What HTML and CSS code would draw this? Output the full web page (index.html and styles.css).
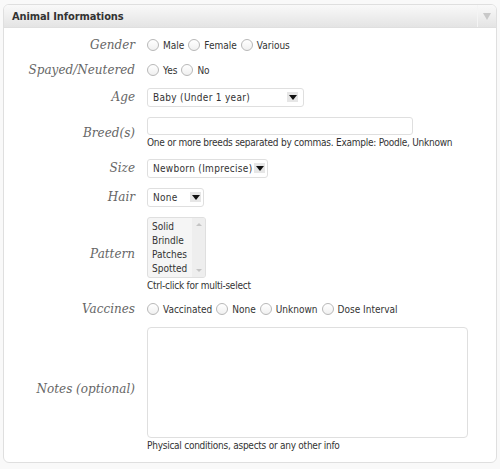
FILE: index.html
```html
<!DOCTYPE html>
<html>
<head>
<meta charset="utf-8">
<link rel="stylesheet" href="styles.css">
</head>
<body>
<div class="box">
  <div class="header">
    <div class="title">Animal Informations</div>
    <div class="toggle"><span class="tri"></span></div>
  </div>
  <div class="form">
    <div class="label">Gender</div>
    <div class="cell radios">
      <span class="radio"></span><span class="opt">Male</span>
      <span class="radio"></span><span class="opt">Female</span>
      <span class="radio"></span><span class="opt">Various</span>
    </div>

    <div class="label">Spayed/Neutered</div>
    <div class="cell radios">
      <span class="radio"></span><span class="opt">Yes</span>
      <span class="radio"></span><span class="opt">No</span>
    </div>

    <div class="label">Age</div>
    <div class="cell">
      <div class="select age"><span class="val">Baby (Under 1 year)</span><span class="arrow"><span class="down"></span></span></div>
    </div>

    <div class="label">Breed(s)</div>
    <div class="cell">
      <div class="input"></div>
      <div class="help">One or more breeds separated by commas. Example: Poodle, Unknown</div>
    </div>

    <div class="label">Size</div>
    <div class="cell">
      <div class="select"><span class="val">Newborn (Imprecise)</span><span class="arrow"><span class="down"></span></span></div>
    </div>

    <div class="label">Hair</div>
    <div class="cell">
      <div class="select hair"><span class="val">None</span><span class="arrow"><span class="down"></span></span></div>
    </div>

    <div class="label">Pattern</div>
    <div class="cell">
      <div class="listbox">
        <div class="items">
          <div>Solid</div>
          <div>Brindle</div>
          <div>Patches</div>
          <div>Spotted</div>
        </div>
        <div class="scroll"><span class="up"></span><span class="dn"></span></div>
      </div>
      <div class="help">Ctrl-click for multi-select</div>
    </div>

    <div class="label">Vaccines</div>
    <div class="cell radios">
      <span class="radio"></span><span class="opt">Vaccinated</span>
      <span class="radio"></span><span class="opt">None</span>
      <span class="radio"></span><span class="opt">Unknown</span>
      <span class="radio"></span><span class="opt">Dose Interval</span>
    </div>

    <div class="label">Notes (optional)</div>
    <div class="cell">
      <div class="textarea"></div>
      <div class="help">Physical conditions, aspects or any other info</div>
    </div>
  </div>
</div>
</body>
</html>
```
FILE: styles.css
```css
html, body {
  margin: 0;
  padding: 0;
}
body {
  background: #f9f9f9;
  padding: 4px 3px 0 3px;
  font-family: "DejaVu Sans Condensed", "DejaVu Sans", sans-serif;
  font-size: 10px;
  color: #333;
}
.box {
  border: 1px solid #dfdfdf;
  border-radius: 6px;
  background: #fff;
  height: 457px;
  overflow: hidden;
}
.header {
  display: flex;
  height: 22px;
  border-bottom: 1px solid #dfdfdf;
  background: linear-gradient(#f9f9f9, #e4e4e4);
}
.title {
  flex: 1;
  padding-left: 8px;
  line-height: 23px;
  font-weight: bold;
  font-size: 11px;
  letter-spacing: -0.1px;
  color: #333;
}
.toggle {
  width: 18px;
  border-left: 1px solid #f4f4f4;
  display: flex;
  align-items: center;
  justify-content: center;
}
.tri {
  width: 0;
  height: 0;
  border-left: 4px solid transparent;
  border-right: 4px solid transparent;
  border-top: 7px solid #c8c8c8;
}
.form {
  display: grid;
  grid-template-columns: 131px 1fr;
  column-gap: 12px;
  row-gap: 10px;
  padding-top: 9.5px;
  align-items: center;
}
.label {
  text-align: right;
  font-family: "DejaVu Serif", serif;
  font-style: italic;
  font-size: 12px;
  color: #666;
}
.radios {
  display: flex;
  align-items: center;
  height: 15px;
}
.radio {
  width: 10px;
  height: 10px;
  border: 1px solid #b8b8b8;
  border-radius: 50%;
  background: linear-gradient(#fff, #f0f0f0);
  margin-right: 4px;
}
.opt {
  margin-right: 4px;
}
.select {
  display: inline-flex;
  align-items: center;
  height: 17px;
  border: 1px solid #dfdfdf;
  border-radius: 3px;
  padding: 0 2px 0 5px;
  background: #fff;
}
.select.age {
  width: 145px;
  padding-right: 5px;
}
.select .val {
  flex: 1;
  letter-spacing: 0.3px;
}
.arrow {
  width: 11px;
  height: 10px;
  background: #e6e6e6;
  display: flex;
  align-items: center;
  justify-content: center;
  margin-left: 2px;
}
.select.hair .val {
  width: 35px;
}
.down {
  width: 0;
  height: 0;
  border-left: 4px solid transparent;
  border-right: 4px solid transparent;
  border-top: 5px solid #111;
}
.input {
  width: 264px;
  height: 16px;
  border: 1px solid #dfdfdf;
  border-radius: 3px;
}
.help {
  margin-top: 1px;
  line-height: 13px;
  letter-spacing: -0.25px;
}
.listbox {
  display: flex;
  width: 57px;
  height: 59px;
  border: 1px solid #dfdfdf;
  border-radius: 3px;
  background: #f5f5f5;
  overflow: hidden;
}
.items {
  flex: 1;
  padding: 2px 0 0 4px;
  line-height: 14px;
}
.scroll {
  width: 13px;
  background: #eeeeee;
  display: flex;
  flex-direction: column;
  justify-content: space-between;
  align-items: center;
  padding: 5px 0;
}
.up, .dn {
  width: 0;
  height: 0;
  border-left: 3px solid transparent;
  border-right: 3px solid transparent;
}
.up { border-bottom: 3px solid #c4c4c4; }
.dn { border-top: 3px solid #c4c4c4; }
.textarea {
  width: 319px;
  height: 109px;
  border: 1px solid #dfdfdf;
  border-radius: 4px;
}
```
